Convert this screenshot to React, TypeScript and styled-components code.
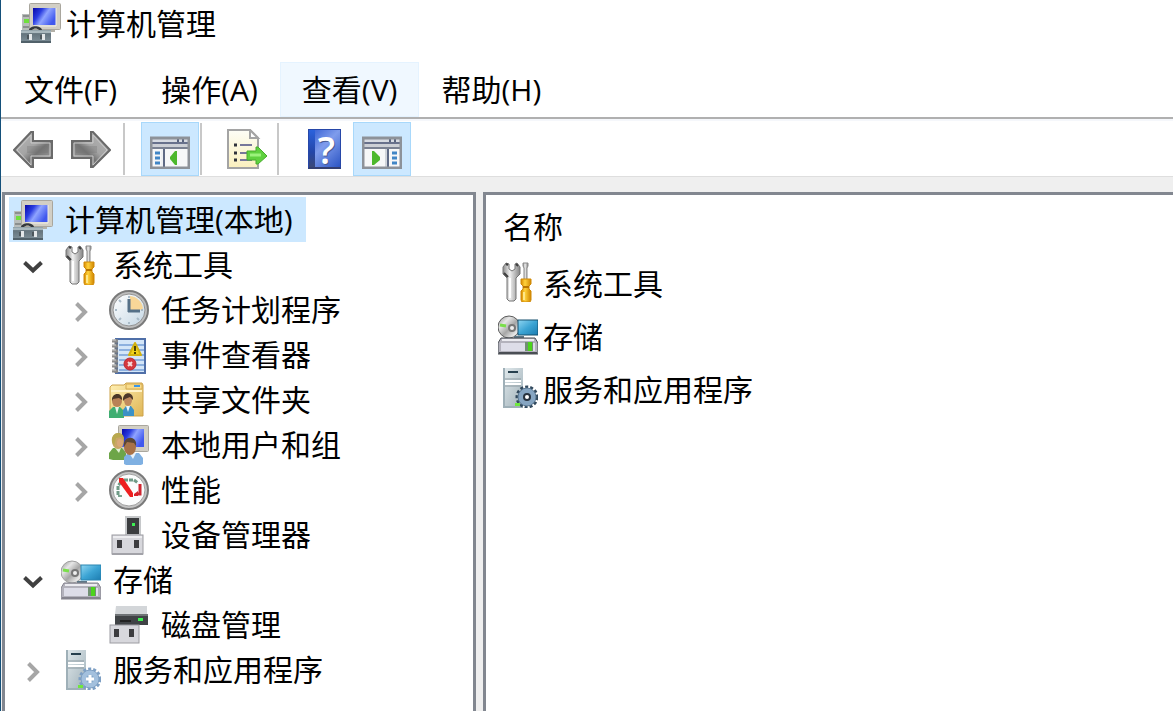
import React, { useState } from "react";
import styled, { createGlobalStyle } from "styled-components";

const GlobalStyle = createGlobalStyle`
  * { box-sizing: border-box; }
  body { margin: 0; background: #fff; }
  button { font: inherit; color: inherit; background: none; border: 0; padding: 0; margin: 0; }
`;

const Window = styled.div`
  display: flex;
  flex-direction: column;
  min-height: 100vh;
  border-left: 1px solid #14507a;
  background: #fff;
  color: #000;
  font-family: "Open Sans", "Noto Sans CJK SC", sans-serif;
  font-size: 30px;
  line-height: 45px;
`;

const TitleBar = styled.header`
  display: flex;
  align-items: center;
  gap: 5px;
  height: 62px;
  padding: 0 20px 16px;
`;

const Title = styled.h1`
  margin: 0;
  font-size: 30px;
  font-weight: 400;
`;

const MenuBar = styled.nav`
  display: flex;
  height: 55px;
  padding-left: 1px;
`;

const MenuItem = styled.button<{ $active?: boolean }>`
  padding: 0 21px;
  border: 1px solid ${(p) => (p.$active ? "#e5f3ff" : "transparent")};
  background: ${(p) => (p.$active ? "#f0f8ff" : "transparent")};
  white-space: nowrap;
`;

const ToolBar = styled.div`
  display: flex;
  align-items: center;
  height: 60px;
  padding: 3px 3px 0;
  border-top: 2px solid #b0b0b0;
  border-bottom: 1px solid #dedede;
  box-shadow: inset 0 2px 0 #f5f7fb;
`;

const ToolButton = styled.button<{ $pressed?: boolean }>`
  display: flex;
  align-items: center;
  justify-content: center;
  width: 58px;
  height: 54px;
  border: 1px solid ${(p) => (p.$pressed ? "#a8d8fb" : "transparent")};
  background: ${(p) => (p.$pressed ? "#cce8ff" : "transparent")};
`;

const ToolGroup = styled.div<{ $first?: boolean }>`
  display: flex;
  padding: ${(p) => (p.$first ? "0 3px 0 0" : "0 1px 0 16px")};
`;

const Separator = styled.span`
  width: 2px;
  height: 52px;
  background: #c8c8c8;
`;

const HelpBook = styled.span`
  display: block;
  width: 33px;
  height: 40px;
  padding-left: 5px;
  border: solid #2747a8;
  border-width: 1px 1px 2px;
  border-bottom-color: #343f70;
  background:
    linear-gradient(#2b62dc, #2446a8 60%, #3a4878) left / 6px 100% no-repeat,
    linear-gradient(135deg, #2f5bd2, #7f9cec 45%, #2c55c4);
  color: #fff;
  font-size: 38px;
  font-weight: 600;
  line-height: 38px;
  text-align: center;
  text-shadow: 1px 1px 0 #4a5d94;
`;

const Workspace = styled.main`
  display: flex;
  flex: 1;
  gap: 7px;
  padding: 15px 0 0 1px;
  background: #efefef;
`;

const TreePane = styled.aside`
  flex: 0 0 474px;
  padding: 2px 4px;
  border: 3px solid #828790;
  border-bottom: 0;
  background: #fff;
`;

const ListPane = styled.section`
  flex: 1;
  min-width: 0;
  padding: 3px 12px;
  border: 3px solid #828790;
  border-right: 0;
  border-bottom: 0;
  background: #fff;
`;

const Branch = styled.ul<{ $nested?: boolean }>`
  list-style: none;
  margin: 0;
  padding: 0 0 0 ${(p) => (p.$nested ? "48px" : "0")};
`;

const Row = styled.div`
  display: flex;
  align-items: center;
  height: 45px;
`;

const Expander = styled.button`
  display: flex;
  align-items: center;
  justify-content: center;
  width: 40px;
  height: 45px;
  padding-top: 4px;
`;

const ExpanderSlot = styled.span`
  width: 48px;
  padding-left: 4px;
`;

const NodeLabel = styled.button<{ $selected?: boolean }>`
  display: flex;
  align-items: center;
  gap: 12px;
  height: 45px;
  padding: 0 13px 0 4px;
  background: ${(p) => (p.$selected ? "#cce8ff" : "transparent")};
  white-space: nowrap;
`;

const Table = styled.table`
  border-collapse: collapse;
  width: 100%;
`;

const HeadCell = styled.th`
  height: 57px;
  padding: 0 5px;
  font-weight: 400;
  text-align: left;
`;

const Cell = styled.td`
  height: 53px;
  padding: 0;
`;

const Entry = styled.div`
  display: flex;
  align-items: center;
  gap: 5px;
  white-space: nowrap;
`;

const EntryName = styled.span`
  padding-top: 4px;
`;

const Glyph = styled.svg`
  display: block;
  flex: none;
  width: 40px;
  height: 40px;
`;

const Chevron = styled.svg`
  display: block;
  width: 20px;
  height: 20px;
`;

const PaintDefs = styled.svg`
  position: absolute;
  width: 0;
  height: 0;
`;

function Icon({ children }: { children: React.ReactNode }) {
  return (
    <Glyph viewBox="0 0 40 40" aria-hidden="true">
      {children}
    </Glyph>
  );
}

function SharedPaints() {
  return (
    <PaintDefs aria-hidden="true">
      <defs>
        <linearGradient id="screen" x1="0" y1="0" x2="1" y2="0.5">
          <stop offset="0" stopColor="#0808a8" />
          <stop offset="0.35" stopColor="#2a3ce0" />
          <stop offset="0.6" stopColor="#8fa4ff" />
          <stop offset="1" stopColor="#4058ee" />
        </linearGradient>
        <linearGradient id="box" x1="0" y1="0" x2="0" y2="1">
          <stop offset="0" stopColor="#9aabb2" />
          <stop offset="0.3" stopColor="#65757e" />
          <stop offset="1" stopColor="#7f9099" />
        </linearGradient>
        <linearGradient id="arrow" x1="0" y1="0" x2="1" y2="1">
          <stop offset="0" stopColor="#b8b8b8" />
          <stop offset="0.45" stopColor="#a4a4a4" />
          <stop offset="0.6" stopColor="#747474" />
          <stop offset="1" stopColor="#a8a8a8" />
        </linearGradient>
        <linearGradient id="steel" x1="0" y1="0" x2="1" y2="0">
          <stop offset="0" stopColor="#8b8b8b" />
          <stop offset="0.4" stopColor="#f0f0f0" />
          <stop offset="1" stopColor="#858585" />
        </linearGradient>
        <linearGradient id="grip" x1="0" y1="0" x2="1" y2="0">
          <stop offset="0" stopColor="#d88a00" />
          <stop offset="0.4" stopColor="#ffd23c" />
          <stop offset="1" stopColor="#cf8500" />
        </linearGradient>
        <linearGradient id="paper" x1="0" y1="0" x2="0" y2="1">
          <stop offset="0" stopColor="#fdfdf6" />
          <stop offset="1" stopColor="#fbf0bd" />
        </linearGradient>
        <linearGradient id="face" x1="0" y1="0" x2="1" y2="1">
          <stop offset="0" stopColor="#ffffff" />
          <stop offset="1" stopColor="#c5d7e4" />
        </linearGradient>
        <linearGradient id="folder" x1="0" y1="0" x2="1" y2="1">
          <stop offset="0" stopColor="#fff0b4" />
          <stop offset="1" stopColor="#dfb656" />
        </linearGradient>
        <linearGradient id="panel" x1="0" y1="0" x2="1" y2="1">
          <stop offset="0" stopColor="#8fd6f2" />
          <stop offset="0.5" stopColor="#3ca4d4" />
          <stop offset="1" stopColor="#1c7cb0" />
        </linearGradient>
        <linearGradient id="case" x1="0" y1="0" x2="1" y2="1">
          <stop offset="0" stopColor="#e2eaed" />
          <stop offset="1" stopColor="#9fb0b8" />
        </linearGradient>
        <linearGradient id="disc" x1="0" y1="0" x2="1" y2="1">
          <stop offset="0" stopColor="#909090" />
          <stop offset="0.3" stopColor="#e6e6e6" />
          <stop offset="0.55" stopColor="#a6a6a6" />
          <stop offset="0.8" stopColor="#e8e8e8" />
          <stop offset="1" stopColor="#848484" />
        </linearGradient>
      </defs>
    </PaintDefs>
  );
}

const ComputerIcon = () => (
  <Icon>
    <rect x="1" y="11" width="10" height="17" fill="#b9bdbb" />
    <rect x="2" y="12" width="7" height="2" fill="#8c908e" />
    <rect x="3" y="16" width="5" height="4" fill="#6fe03c" />
    <rect x="2" y="23" width="8" height="2" fill="#8b8f8e" />
    <rect x="8.5" y="0.5" width="31" height="26" rx="1" fill="#d2cfc5" stroke="#a9a69d" />
    <rect x="12" y="5" width="23" height="17" fill="url(#screen)" />
    <path d="M35 5v18H13" fill="none" stroke="#f1efe7" />
    <path d="M8 27c1-5 12-5 13 0h-3c-2-2-5-2-7 0z" fill="#33383c" />
    <path d="M20 27h14v2H20z" fill="#b4b1a8" />
    <rect x="0" y="27" width="30" height="13" fill="url(#box)" />
    <path d="M0 29h30" stroke="#a9b8be" strokeWidth="2" />
    <path d="M0 39h30" stroke="#51616a" strokeWidth="2" />
    <path d="M6 32h4v4H6zM19 32h4v4h-4z" fill="#4c565c" />
    <path d="M8 31h3v6H8zM21 31h3v6h-3z" fill="#e4e8ea" />
  </Icon>
);

const ArrowIcon = ({ forward }: { forward?: boolean }) => (
  <Icon>
    <g transform={forward ? "matrix(-1 0 0 1 40 0)" : undefined}>
      <path d="M1 21L18 3h2v9h19v17H20v9h-2z" fill="url(#arrow)" stroke="#6a6a6a" strokeWidth="2" />
      <path d="M4 21L18 6v8h19v13H18v9z" fill="none" stroke="#cacaca" strokeWidth="1" />
      <path d="M14 17h21v7H14z" fill="#6f6f6f" opacity="0.3" />
    </g>
  </Icon>
);

const PaneIcon = ({ mirrored }: { mirrored?: boolean }) => (
  <Icon>
    <rect x="1" y="9" width="38" height="30" fill="#f6f7f8" />
    <rect x="2" y="10" width="36" height="3" fill="#d7dbe2" />
    <path d="M2 14h36" stroke="#68718c" strokeWidth="2" />
    <rect x="2" y="15" width="36" height="3" fill="#cdd0d6" />
    <path d="M2 19h36" stroke="#7a8192" strokeWidth="2" />
    <path d="M27 10h2v3h-2zM32 10h2v3h-2z" fill="#59647f" />
    {mirrored ? (
      <>
        <path d="M26 20v18" stroke="#5f6a85" strokeWidth="2" />
        <path d="M24 20v18" stroke="#d0d4da" strokeWidth="2" />
        <path d="M30 24h5M30 29h5M30 34h5" stroke="#4186c6" strokeWidth="3" />
        <path d="M10 22h2l6 6v3l-6 5h-2z" fill="#4cb82c" />
      </>
    ) : (
      <>
        <path d="M14 20v18" stroke="#5f6a85" strokeWidth="2" />
        <path d="M12 20v18" stroke="#e6e9ed" strokeWidth="1" />
        <path d="M5 24h5M5 29h5M5 34h5" stroke="#4186c6" strokeWidth="3" />
        <path d="M27 22h-2l-5 6v2l5 6h2z" fill="#4cb82c" />
      </>
    )}
    <path d="M1 9h38v30H1z" fill="none" stroke="#8d9299" strokeWidth="3" />
  </Icon>
);

const ExportIcon = () => (
  <Icon>
    <path d="M1 1h22l8 8v30H1z" fill="url(#paper)" stroke="#a4a4a4" strokeWidth="2" />
    <path d="M23 1v8h8z" fill="#fff" stroke="#a4a4a4" strokeWidth="2" />
    <path d="M7 16h3M7 24h3M7 31h3" stroke="#30323c" strokeWidth="3" />
    <path d="M13 16h12M13 24h10M13 31h12" stroke="#77779a" strokeWidth="2" />
    <path d="M20 22h9v-4h2l9 9-9 8h-2v-4h-9z" fill="#5fd13f" stroke="#48ac2c" />
    <path d="M23 26h11" stroke="#9bf27c" strokeWidth="3" />
  </Icon>
);

const ToolsIcon = () => (
  <Icon>
    <path
      d="M8 1L5 5v7l4 4v21l2 2h5l2-2V16l4-4V5l-3-4-2 1v5l-3 2-3-2V2z"
      fill="url(#steel)"
      stroke="#747474"
    />
    <path d="M8 2l2 1M18 2l2 2M6 11l4 4" stroke="#3f3f3f" strokeWidth="2" />
    <path d="M12 16v20" stroke="#fff" strokeWidth="2" />
    <path d="M25 1h5v3l-1 2v12h-3V6l-1-2z" fill="url(#steel)" stroke="#8a8a8a" />
    <path d="M23 17h10v5l-2 2v3l2 2v9l-1 2h-8l-1-2v-9l2-2v-3l-2-2z" fill="url(#grip)" stroke="#d08a08" />
    <path d="M26 30v8" stroke="#ffe88a" strokeWidth="2" />
    <path d="M25 25h6" stroke="#b97500" strokeWidth="2" />
  </Icon>
);

const ClockIcon = () => (
  <Icon>
    <circle cx="20" cy="20" r="19" fill="#bdbdbd" stroke="#7a7a7a" strokeWidth="2" />
    <circle cx="20" cy="20" r="16" fill="url(#face)" stroke="#929292" strokeWidth="1" />
    <path d="M21 20V6a14 14 0 0 1 13 14z" fill="#f8d798" />
    <path d="M20 6v2M6 20h2M20 34v-2M34 20h-2M10 10l2 2M10 30l2-2M30 30l-2-2" stroke="#a9bbc8" strokeWidth="2" />
    <path d="M20 9v13M19 21h12" fill="none" stroke="#557087" strokeWidth="3" />
  </Icon>
);

const EventIcon = () => (
  <Icon>
    <rect x="6" y="3" width="31" height="36" fill="#4f6fa8" />
    <rect x="9" y="5" width="26" height="32" fill="#d4e6f8" />
    <path d="M10 10h25M10 15h25M10 20h25M10 25h25M10 30h25M10 35h25" stroke="#8db1df" strokeWidth="2" />
    <path d="M7 4v34" stroke="#6a7482" strokeWidth="3" />
    <path d="M3 6h6M3 11h6M3 16h6M3 21h6M3 26h6M3 31h6M3 36h6" stroke="#8c8c8c" strokeWidth="3" />
    <path d="M3 5h4M3 10h4M3 15h4M3 20h4M3 25h4M3 30h4M3 35h4" stroke="#d0d0d0" />
    <path d="M26 8l6 12H20z" fill="#f0d21c" stroke="#d2b20f" strokeWidth="2" strokeLinejoin="round" />
    <path d="M26 11v5M26 17v2" stroke="#4c4200" strokeWidth="2" />
    <circle cx="21" cy="29" r="6" fill="#d4383e" stroke="#bb2a33" />
    <path d="M19 27l4 4M23 27l-4 4" stroke="#f7dcdc" strokeWidth="2" />
  </Icon>
);

const SharedFolderIcon = () => (
  <Icon>
    <path d="M1 7l2-2h12l2-2h16l1 2v31H1z" fill="url(#folder)" stroke="#cda24a" />
    <path d="M17 4h16v5H17z" fill="#f9dc8b" stroke="#d5ab52" />
    <path d="M25 6h6" stroke="#3c97e8" strokeWidth="2" />
    <path d="M2 11h31" stroke="#fff3c8" strokeWidth="2" />
    <path d="M0 38v-7l4-4h7l4 4v7z" fill="#3fae72" />
    <path d="M6 27h4l-2 7z" fill="#e4f5ea" />
    <ellipse cx="8" cy="21" rx="5" ry="6" fill="#b98256" />
    <path d="M3 21c-1-9 11-9 10-1l-3-2-6 1z" fill="#4a3728" />
    <path d="M14 36v-6l3-4h5l3 4v6z" fill="#3b91c6" />
    <path d="M17 26h4l-2 6z" fill="#eaf5fb" />
    <ellipse cx="19" cy="20" rx="4" ry="6" fill="#c08a5e" />
    <path d="M14 21c-1-10 11-10 10-1l-3-3-5 2z" fill="#4c382a" />
  </Icon>
);

const UsersIcon = () => (
  <Icon>
    <rect x="9.500" y="0.500" width="30" height="26" rx="1" fill="#d2cfc5" stroke="#aaa79e" />
    <rect x="13" y="4" width="22" height="18" fill="url(#screen)" />
    <path d="M0 34v-6l4-5h9l4 5v7H4z" fill="#6da548" />
    <path d="M6 23h6l-2 5z" fill="#dff0d2" />
    <ellipse cx="9" cy="16" rx="6" ry="8" fill="#c9a566" />
    <path d="M3 17C1 6 16 5 15 15l-3-3-5 1-2 8z" fill="#b9a94f" />
    <ellipse cx="11" cy="18" rx="3" ry="4" fill="#d9a678" />
    <path d="M15 39v-7l4-4h11l4 5v6l-2 1H17z" fill="#7fb0e2" />
    <path d="M20 28h7l-3 6z" fill="#e9f3fc" />
    <ellipse cx="21" cy="22" rx="6" ry="8" fill="#a87248" />
    <path d="M15 22c-2-12 14-12 12-1l-2-3-7-1z" fill="#594637" />
  </Icon>
);

const PerformanceIcon = () => (
  <Icon>
    <circle cx="20" cy="20" r="19" fill="#c4c4c4" stroke="#7a7a7a" strokeWidth="2" />
    <circle cx="20" cy="20" r="16" fill="#fbfcfc" stroke="#a0a0a0" strokeWidth="1" />
    <path d="M9 25V16l3-4M15 10h10l4 3" fill="none" stroke="#6f9a86" strokeWidth="3" strokeDasharray="4 1" />
    <path d="M31 14v10h-3" fill="none" stroke="#cf2530" strokeWidth="3" />
    <path d="M25 24l4-3v5h-4z" fill="#d9222b" />
    <path d="M10 8h4l10 15v4h-3L10 12z" fill="#ee1f1f" />
    <path d="M9 26h4" stroke="#7aa58f" strokeWidth="2" />
  </Icon>
);

const DeviceIcon = () => (
  <Icon>
    <rect x="16" y="1" width="16" height="20" fill="#c6c8ca" />
    <rect x="18" y="3" width="12" height="16" fill="#3b3d3f" />
    <rect x="23" y="8" width="3" height="3" fill="#3df052" />
    <rect x="3" y="20" width="31" height="19" fill="#d7d7dc" stroke="#9c9ca2" strokeWidth="1" />
    <path d="M4 22h29" stroke="#ededf0" strokeWidth="2" />
    <path d="M8 25h5v8H8zM25 25h5v8h-5z" fill="#3d3d40" />
    <path d="M3 39h31" stroke="#a2a2a8" strokeWidth="2" />
  </Icon>
);

const StorageIcon = ({ outlined }: { outlined?: boolean }) => {
  const edge = outlined ? "#4a4e54" : "#85848e";
  return (
    <Icon>
      <circle cx="11" cy="12" r="11" fill="url(#disc)" stroke={outlined ? "#5c5c5c" : "#a0a0a0"} strokeWidth="1" />
      <path d="M2 10l6 1" stroke="#7adf4a" strokeWidth="3" />
      <circle cx="14" cy="13" r="4" fill="#777" />
      <circle cx="14" cy="13" r="2" fill="#efefef" />
      <rect x="20" y="5" width="20" height="15" fill="url(#panel)" stroke={outlined ? "#17506e" : "#2b86b2"} strokeWidth="1" />
      <path d="M16 21h10v2H16z" fill="#5d7686" />
      <path d="M3 23h34l3 5v11H0V28z" fill="#b3b2bc" stroke={edge} strokeWidth="1" />
      <path d="M4 25h32" stroke="#ececf1" strokeWidth="2" />
      <rect x="3" y="28" width="34" height="8" fill="#dddde8" />
      <rect x="27" y="27" width="8" height="9" fill="#719073" />
      <rect x="30" y="27" width="4" height="9" fill="#4cd41c" />
      <path d="M1 38h38" stroke={edge} strokeWidth="2" />
    </Icon>
  );
};

const DiskIcon = () => (
  <Icon>
    <path d="M7 1h31v8H6z" fill="#d3d6d9" />
    <rect x="6" y="9" width="33" height="11" fill="#404346" />
    <path d="M6 10h33" stroke="#6f7376" strokeWidth="2" />
    <path d="M11 16h11" stroke="#222" strokeWidth="2" />
    <rect x="29" y="13" width="5" height="3" fill="#3df052" />
    <rect x="1" y="20" width="29" height="18" fill="#d7d7dc" stroke="#9c9ca2" strokeWidth="1" />
    <path d="M5 24h5v8H5zM20 24h5v8h-5z" fill="#3d3d40" />
  </Icon>
);

const ServicesIcon = ({ outlined }: { outlined?: boolean }) => (
  <Icon>
    <rect x="5" y="0" width="20" height="40" fill="url(#case)" />
    <path d="M6 0v40M5 39h18" stroke="#9fb0b8" strokeWidth="2" />
    <path d="M10 4h10" stroke="#27404e" strokeWidth="2" />
    <path d="M7 11h16M7 18h16" stroke="#8c9aa1" strokeWidth="1" />
    <path d="M7 13h16M7 16h16" stroke="#fff" strokeWidth="2" />
    <circle cx="29" cy="29" r="10" fill="none" stroke={outlined ? "#31485c" : "#7d9fc4"} strokeWidth="3" strokeDasharray="3 2" />
    <circle cx="29" cy="29" r="9" fill={outlined ? "#86a5c2" : "#a3c0dd"} stroke={outlined ? "#5a7892" : "#7e9fc2"} strokeWidth="1" />
    <circle cx="29" cy="29" r="4" fill={outlined ? "#28323e" : "#86a8ca"} />
    {outlined ? (
      <circle cx="29" cy="29" r="2" fill="#fff" />
    ) : (
      <path d="M29 25v8M25 29h8" stroke="#fff" strokeWidth="3" />
    )}
    <rect x="17" y="35" width="5" height="3" fill="#6fe83c" />
  </Icon>
);

type TreeNode = {
  label: string;
  icon: React.ReactNode;
  expandable?: boolean;
  children?: TreeNode[];
};

const tree: TreeNode[] = [
  {
    label: "系统工具",
    icon: <ToolsIcon />,
    expandable: true,
    children: [
      { label: "任务计划程序", icon: <ClockIcon />, expandable: true },
      { label: "事件查看器", icon: <EventIcon />, expandable: true },
      { label: "共享文件夹", icon: <SharedFolderIcon />, expandable: true },
      { label: "本地用户和组", icon: <UsersIcon />, expandable: true },
      { label: "性能", icon: <PerformanceIcon />, expandable: true },
      { label: "设备管理器", icon: <DeviceIcon /> },
    ],
  },
  {
    label: "存储",
    icon: <StorageIcon />,
    expandable: true,
    children: [{ label: "磁盘管理", icon: <DiskIcon /> }],
  },
  { label: "服务和应用程序", icon: <ServicesIcon />, expandable: true },
];

const entries = [
  { label: "系统工具", icon: <ToolsIcon /> },
  { label: "存储", icon: <StorageIcon outlined /> },
  { label: "服务和应用程序", icon: <ServicesIcon outlined /> },
];

const menus = ["文件(F)", "操作(A)", "查看(V)", "帮助(H)"];

function TreeItem({ node }: { node: TreeNode }) {
  const [open, setOpen] = useState(Boolean(node.children));
  return (
    <li>
      <Row>
        <ExpanderSlot>
          {node.expandable && (
            <Expander aria-label={node.label} aria-expanded={open} onClick={() => setOpen(!open)}>
              <Chevron viewBox="0 0 20 20" aria-hidden="true">
                {open ? (
                  <path d="M1.500 5.500l8.500 8 8.500-8" fill="none" stroke="#404040" strokeWidth="4" />
                ) : (
                  <path d="M5.500 1.500l8.500 8.500-8.500 8.500" fill="none" stroke="#a6a6a6" strokeWidth="4" />
                )}
              </Chevron>
            </Expander>
          )}
        </ExpanderSlot>
        <NodeLabel>
          {node.icon}
          {node.label}
        </NodeLabel>
      </Row>
      {open && node.children && (
        <Branch $nested>
          {node.children.map((child) => (
            <TreeItem key={child.label} node={child} />
          ))}
        </Branch>
      )}
    </li>
  );
}

export default function App() {
  return (
    <Window>
      <GlobalStyle />
      <SharedPaints />
      <TitleBar>
        <ComputerIcon />
        <Title>计算机管理</Title>
      </TitleBar>
      <MenuBar>
        {menus.map((menu) => (
          <MenuItem key={menu} $active={menu === "查看(V)"}>
            {menu}
          </MenuItem>
        ))}
      </MenuBar>
      <ToolBar role="toolbar">
        <ToolGroup $first>
          <ToolButton aria-label="后退"><ArrowIcon /></ToolButton>
          <ToolButton aria-label="前进"><ArrowIcon forward /></ToolButton>
        </ToolGroup>
        <Separator />
        <ToolGroup>
          <ToolButton $pressed aria-label="显示/隐藏控制台树"><PaneIcon /></ToolButton>
        </ToolGroup>
        <Separator />
        <ToolGroup>
          <ToolButton aria-label="导出列表"><ExportIcon /></ToolButton>
        </ToolGroup>
        <Separator />
        <ToolGroup>
          <ToolButton aria-label="帮助"><HelpBook>?</HelpBook></ToolButton>
          <ToolButton $pressed aria-label="显示/隐藏操作窗格"><PaneIcon mirrored /></ToolButton>
        </ToolGroup>
      </ToolBar>
      <Workspace>
        <TreePane>
          <NodeLabel $selected>
            <ComputerIcon />
            计算机管理(本地)
          </NodeLabel>
          <Branch>
            {tree.map((node) => (
              <TreeItem key={node.label} node={node} />
            ))}
          </Branch>
        </TreePane>
        <ListPane>
          <Table>
            <thead>
              <tr>
                <HeadCell scope="col">名称</HeadCell>
              </tr>
            </thead>
            <tbody>
              {entries.map((entry) => (
                <tr key={entry.label}>
                  <Cell>
                    <Entry>
                      {entry.icon}
                      <EntryName>{entry.label}</EntryName>
                    </Entry>
                  </Cell>
                </tr>
              ))}
            </tbody>
          </Table>
        </ListPane>
      </Workspace>
    </Window>
  );
}
